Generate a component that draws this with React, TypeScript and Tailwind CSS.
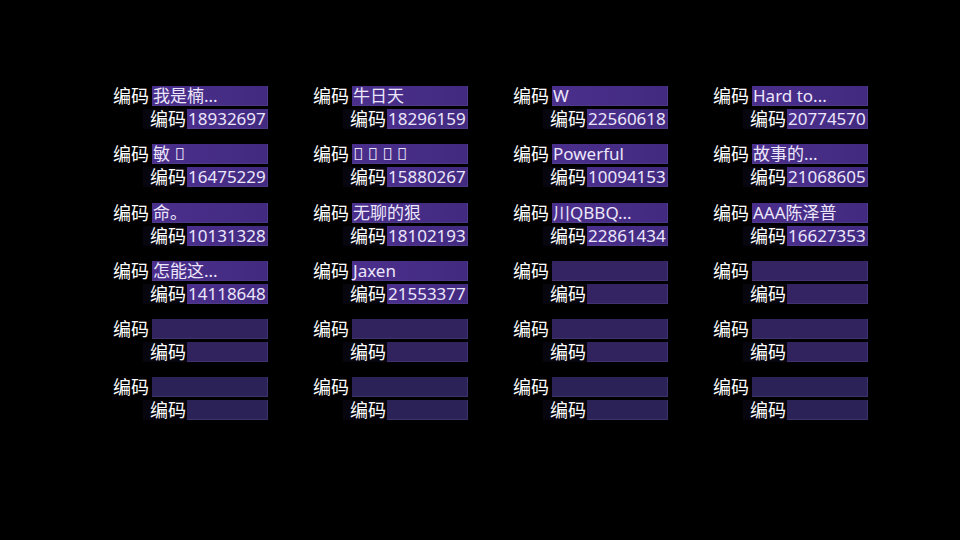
import React from 'react';

type Entry = { name: string; code: string };

// column-major data, six slots per column
const columns: Entry[][] = [
  [
    { name: '我是楠...', code: '18932697' },
    { name: '敏 \uE000', code: '16475229' },
    { name: '命。', code: '10131328' },
    { name: '怎能这...', code: '14118648' },
    { name: '', code: '' },
    { name: '', code: '' },
  ],
  [
    { name: '牛日天', code: '18296159' },
    { name: '\uE000 \uE000 \uE000 \uE000', code: '15880267' },
    { name: '无聊的狠', code: '18102193' },
    { name: 'Jaxen', code: '21553377' },
    { name: '', code: '' },
    { name: '', code: '' },
  ],
  [
    { name: 'W', code: '22560618' },
    { name: 'Powerful', code: '10094153' },
    { name: '川QBBQ...', code: '22861434' },
    { name: '', code: '' },
    { name: '', code: '' },
    { name: '', code: '' },
  ],
  [
    { name: 'Hard to...', code: '20774570' },
    { name: '故事的...', code: '21068605' },
    { name: 'AAA陈泽普', code: '16627353' },
    { name: '', code: '' },
    { name: '', code: '' },
    { name: '', code: '' },
  ],
];

// empty slots get darker the lower they sit
const emptyBg = [
  'bg-[#3a2466]',
  'bg-[#382465]',
  'bg-[#362463]',
  'bg-[#352464]',
  'bg-[#30235e]',
  'bg-[#2b2258]',
];

const Slot = ({ entry, row }: { entry: Entry; row: number }) => {
  const filled = entry.code !== '';
  const box = filled
    ? 'bg-gradient-to-r from-[#4a2f8c] to-[#422a80]'
    : emptyBg[row];
  return (
    <div className="flex flex-col w-[155px]">
      <div className="flex items-center h-[20px]">
        <span className="w-[39px] text-[18px] leading-none text-white">编码</span>
        <div className={`flex-1 h-[20px] flex items-center pl-[1px] border-r border-b border-[#5a4a8a]/40 ${box}`}>
          <span className="text-[17px] leading-none text-[#ece6fa] whitespace-nowrap">{entry.name}</span>
        </div>
      </div>
      <div className="flex items-center h-[20px] mt-[3px] pl-[30px]">
        <span className="w-[44px] pl-[7px] h-[20px] flex items-center text-[18px] leading-none text-white bg-[#07060f]">编码</span>
        <div className={`flex-1 h-[20px] flex items-center pl-[1px] border-r border-b border-[#5a4a8a]/40 ${box}`}>
          <span className="text-[17px] leading-none text-[#ece6fa]">{entry.code}</span>
        </div>
      </div>
    </div>
  );
};

export default function App() {
  return (
    <div
      className="w-[960px] h-[540px] bg-black pt-[86px] pl-[113px]"
      style={{ fontFamily: '"Noto Sans", "Noto Sans CJK SC", sans-serif' }}
    >
      <div className="flex gap-[45px]">
        {columns.map((col, ci) => (
          <div key={ci} className="flex flex-col gap-[15.3px]">
            {col.map((entry, ri) => (
              <Slot key={ri} entry={entry} row={ri} />
            ))}
          </div>
        ))}
      </div>
    </div>
  );
}
